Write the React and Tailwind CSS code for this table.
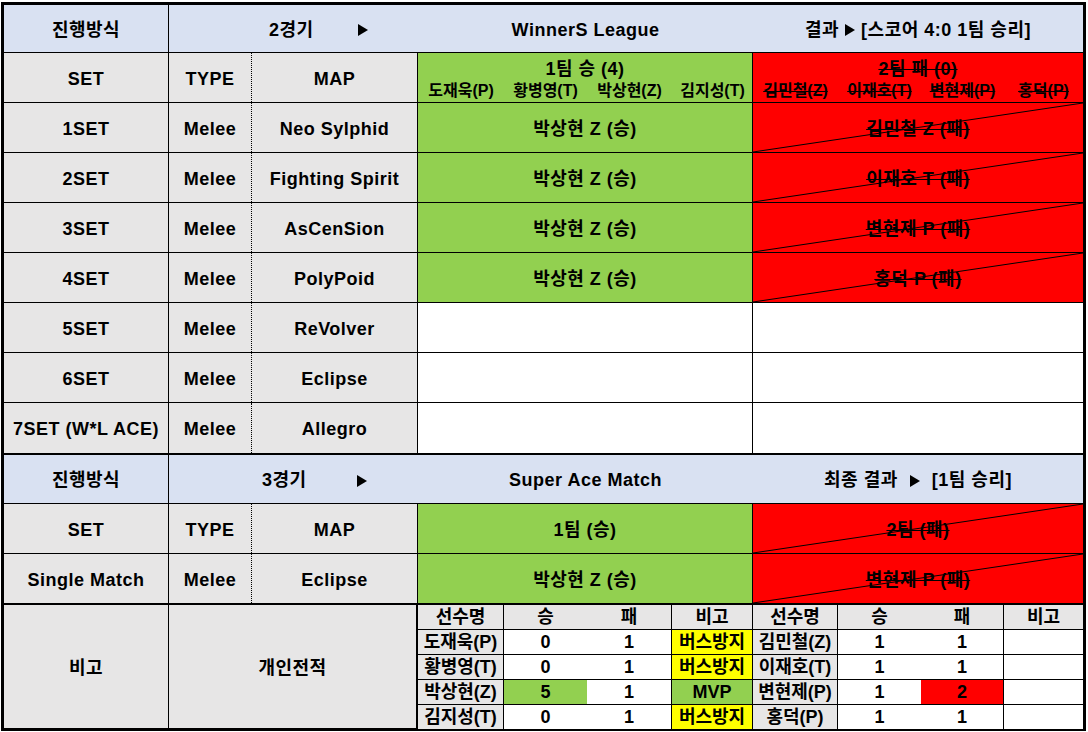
import React from "react";

const GRAY = "bg-[#E7E6E6]";
const BLUE = "bg-[#D9E1F2]";
const GREEN = "bg-[#92D050]";
const RED = "bg-[#FF0000]";
const C = "flex items-center justify-center pt-[3px]";

// set results for game 2
const sets = [
  { set: "1SET", type: "Melee", map: "Neo Sylphid", win: "박상현 Z (승)", lose: "김민철 Z (패)" },
  { set: "2SET", type: "Melee", map: "Fighting Spirit", win: "박상현 Z (승)", lose: "이재호 T (패)" },
  { set: "3SET", type: "Melee", map: "AsCenSion", win: "박상현 Z (승)", lose: "변현제 P (패)" },
  { set: "4SET", type: "Melee", map: "PolyPoid", win: "박상현 Z (승)", lose: "홍덕 P (패)" },
  { set: "5SET", type: "Melee", map: "ReVolver" },
  { set: "6SET", type: "Melee", map: "Eclipse" },
  { set: "7SET (W*L ACE)", type: "Melee", map: "Allegro" },
];

const team1 = ["도재욱(P)", "황병영(T)", "박상현(Z)", "김지성(T)"];
const team2 = ["김민철(Z)", "이재호(T)", "변현제(P)", "홍덕(P)"];

const stats = [
  { a: ["도재욱(P)", "0", "1", "버스방지"], b: ["김민철(Z)", "1", "1", ""] },
  { a: ["황병영(T)", "0", "1", "버스방지"], b: ["이재호(T)", "1", "1", ""] },
  { a: ["박상현(Z)", "5", "1", "MVP"], b: ["변현제(P)", "1", "2", ""] },
  { a: ["김지성(T)", "0", "1", "버스방지"], b: ["홍덕(P)", "1", "1", ""] },
];

function Arrow() {
  return (
    <svg width="10" height="12" viewBox="0 0 10 12" className="inline-block">
      <path d="M0 0 L10 6 L0 12 Z" fill="black" />
    </svg>
  );
}

// red "lost" cell with a diagonal line through it
function LoseCell({ children }) {
  return (
    <div className={`relative flex-1 ${C} ${RED}`}>
      <svg className="absolute inset-0 w-full h-full" viewBox="0 0 100 100" preserveAspectRatio="none">
        <line x1="0" y1="100" x2="100" y2="0" stroke="black" strokeWidth="1" vectorEffect="non-scaling-stroke" />
      </svg>
      <span className="relative line-through">{children}</span>
    </div>
  );
}

function SetCols({ set, type, map }) {
  return (
    <>
      <div className={`w-[165px] border-r border-black ${C} ${GRAY}`}>{set}</div>
      <div className={`w-[83px] border-r border-dotted border-black ${C} ${GRAY}`}>{type}</div>
      <div className={`w-[166px] border-r border-black ${C} ${GRAY}`}>{map}</div>
    </>
  );
}

const colW = ["w-[86px]", "w-[83px]", "w-[85px]", "w-[81px]", "w-[85px]", "w-[83px]", "w-[83px]", "flex-1"];
const colB = ["border-r", "", "border-r", "border-r", "border-r", "", "border-r", ""];

function StatRow({ cells, last, header }) {
  return (
    <div className={`flex ${last ? "h-[24px]" : "h-[25px] border-b"} border-black`}>
      {cells.map((c, i) => {
        let bg = "bg-white";
        if (header || i === 0 || i === 4) bg = GRAY;
        if (c === "버스방지") bg = "bg-[#FFFF00]";
        if (c === "MVP" || (i === 1 && c === "5")) bg = GREEN;
        if (i === 6 && c === "2") bg = RED;
        return (
          <div key={i} className={`${colW[i]} ${colB[i]} border-black flex items-center justify-center pt-px tracking-normal ${bg}`}>
            {c}
          </div>
        );
      })}
    </div>
  );
}

export default function App() {
  return (
    <div className="min-h-screen bg-white pl-px pt-[2px] font-['Liberation_Sans','Noto_Sans_CJK_KR',sans-serif] font-bold text-[18px] text-black tracking-[0.5px]">
      <div className="w-[1085px] border-[3px] border-black">
        {/* game 2 header */}
        <div className={`flex h-[48px] border-b border-black ${BLUE}`}>
          <div className={`w-[165px] border-r border-black ${C}`}>진행방식</div>
          <div className="w-[249px] flex items-center pt-[3px] pl-[100px] gap-[44px]">
            <span>2경기</span>
            <Arrow />
          </div>
          <div className={`w-[335px] ${C}`}>WinnerS League</div>
          <div className={`flex-1 ${C} gap-[6px]`}>
            <span>결과</span>
            <Arrow />
            <span>[스코어 4:0 1팀 승리]</span>
          </div>
        </div>

        <div className="flex h-[50px] border-b border-black">
          <SetCols set="SET" type="TYPE" map="MAP" />
          <div className={`w-[335px] border-r border-black flex flex-col items-center ${GREEN}`}>
            <div className="mt-[5px] leading-[22px]">1팀 승 (4)</div>
            <div className="grid grid-cols-[86px_83px_85px_81px] w-full text-[16px] tracking-normal leading-[22px]">
              {team1.map((n) => (
                <span key={n} className="text-center">{n}</span>
              ))}
            </div>
          </div>
          <div className={`flex-1 flex flex-col items-center ${RED}`}>
            <div className="mt-[5px] leading-[22px] line-through">2팀 패 (0)</div>
            <div className="grid grid-cols-[85px_83px_83px_79px] w-full text-[16px] tracking-normal leading-[22px]">
              {team2.map((n) => (
                <span key={n} className="text-center line-through">{n}</span>
              ))}
            </div>
          </div>
        </div>

        {sets.map((s, i) => (
          <div key={s.set} className={`flex border-black ${i === sets.length - 1 ? "h-[52px] border-b-2" : "h-[50px] border-b"}`}>
            <SetCols set={s.set} type={s.type} map={s.map} />
            {s.win ? (
              <>
                <div className={`w-[335px] border-r border-black ${C} ${GREEN}`}>{s.win}</div>
                <LoseCell>{s.lose}</LoseCell>
              </>
            ) : (
              <>
                <div className="w-[335px] border-r border-black bg-white" />
                <div className="flex-1 bg-white" />
              </>
            )}
          </div>
        ))}

        {/* game 3 header */}
        <div className={`flex h-[49px] border-b border-black ${BLUE}`}>
          <div className={`w-[165px] border-r border-black ${C}`}>진행방식</div>
          <div className="w-[249px] flex items-center pt-[3px] pl-[93px] gap-[50px]">
            <span>3경기</span>
            <Arrow />
          </div>
          <div className={`w-[335px] ${C}`}>Super Ace Match</div>
          <div className={`flex-1 ${C} gap-[12px]`}>
            <span>최종 결과</span>
            <Arrow />
            <span>[1팀 승리]</span>
          </div>
        </div>

        <div className="flex h-[50px] border-b border-black">
          <SetCols set="SET" type="TYPE" map="MAP" />
          <div className={`w-[335px] border-r border-black ${C} ${GREEN}`}>1팀 (승)</div>
          <LoseCell>2팀 (패)</LoseCell>
        </div>

        <div className="flex h-[51px] border-b-2 border-black">
          <SetCols set="Single Match" type="Melee" map="Eclipse" />
          <div className={`w-[335px] border-r border-black ${C} ${GREEN}`}>박상현 Z (승)</div>
          <LoseCell>변현제 P (패)</LoseCell>
        </div>

        {/* personal records */}
        <div className="flex h-[123px]">
          <div className={`w-[165px] border-r border-black ${C} ${GRAY}`}>비고</div>
          <div className={`w-[249px] border-r-2 border-black ${C} ${GRAY}`}>개인전적</div>
          <div className="flex-1 flex flex-col">
            <StatRow header cells={["선수명", "승", "패", "비고", "선수명", "승", "패", "비고"]} />
            {stats.map((r, i) => (
              <StatRow key={i} cells={[...r.a, ...r.b]} last={i === stats.length - 1} />
            ))}
          </div>
        </div>
      </div>
    </div>
  );
}
